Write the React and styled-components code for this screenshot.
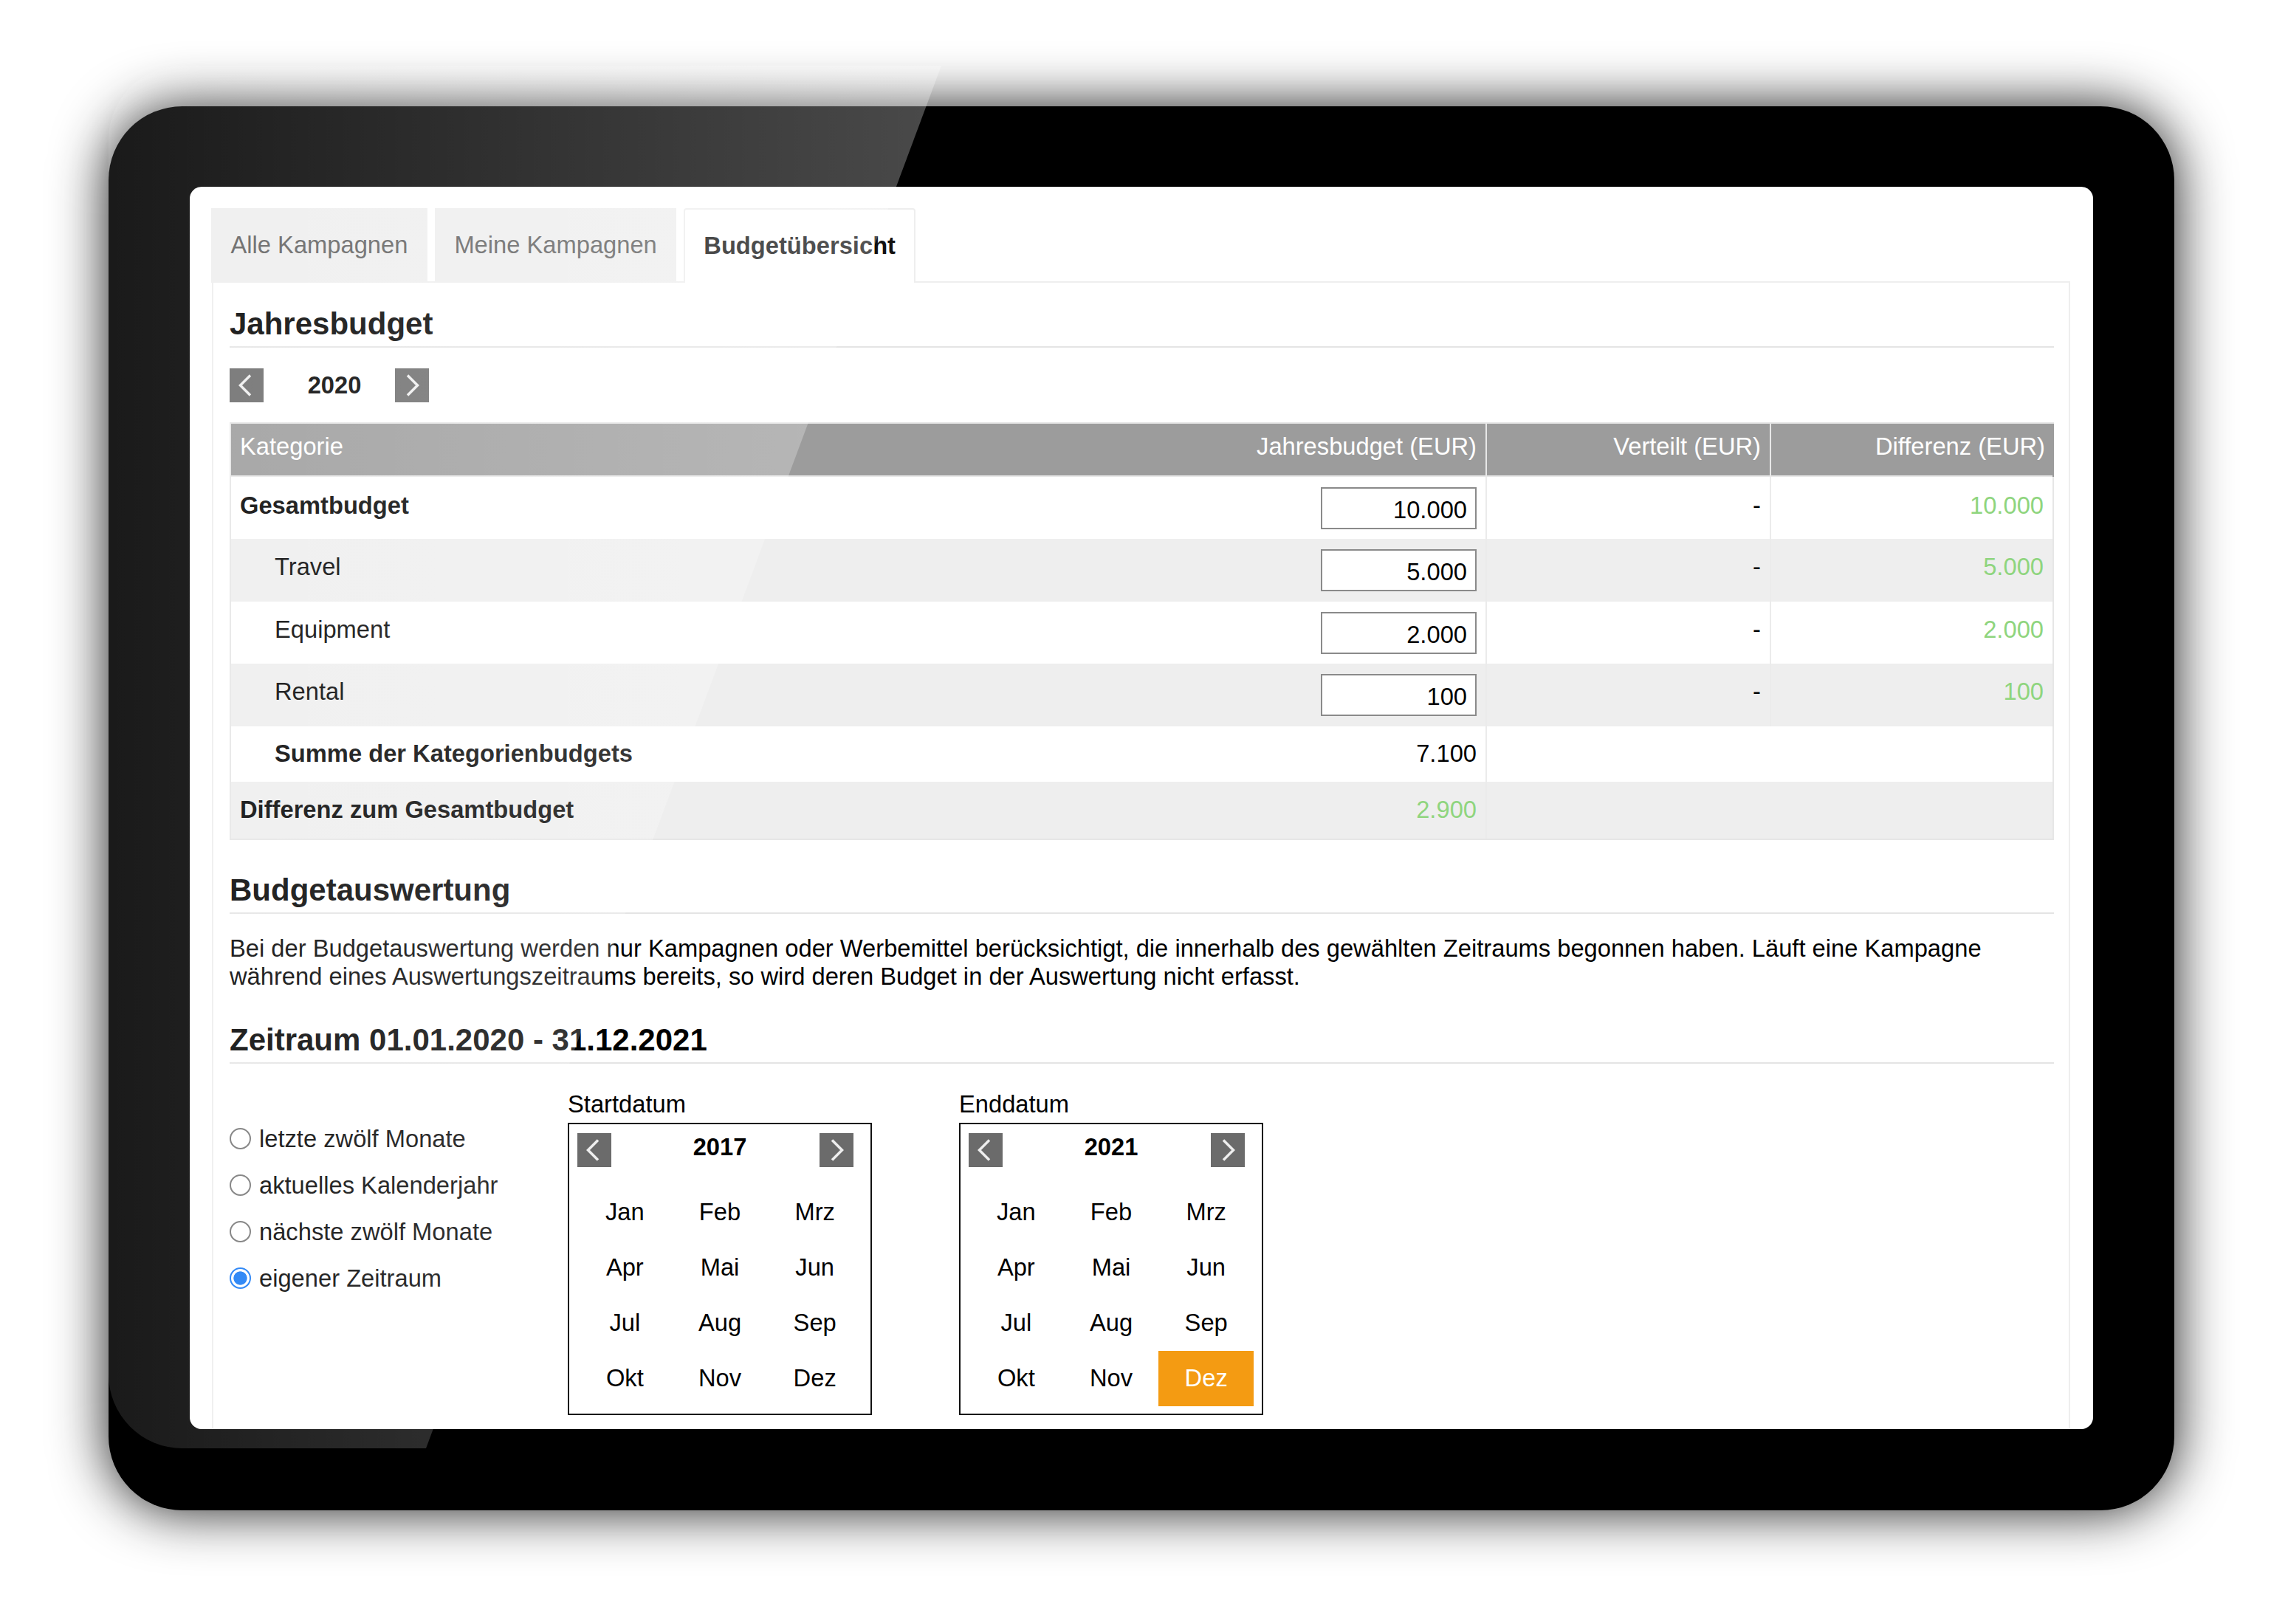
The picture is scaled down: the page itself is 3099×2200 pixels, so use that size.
import React from 'react';
import styled, { createGlobalStyle } from 'styled-components';

const GlobalStyle = createGlobalStyle`
  html, body {
    margin: 0;
    background: #fff;
  }
  * {
    box-sizing: border-box;
  }
`;

const Page = styled.div`
  position: relative;
  width: 3099px;
  height: 2200px;
  padding: 144px 0 0 147px;
  overflow: hidden;
  background: #fff;
  font-family: 'Liberation Sans', Arial, sans-serif;
  font-size: 32.7px;
  line-height: 37.6px;
  color: #000;
`;

const Tablet = styled.div`
  width: 2798px;
  height: 1902px;
  padding: 109px 110px;
  background: #000;
  border-radius: 100px;
  box-shadow: 0 0 75px rgba(0, 0, 0, 0.9);
`;

// Spiegelung liegt über dem ganzen Gerät
const Glare = styled.div`
  position: absolute;
  left: 147px;
  top: 89px;
  width: 1128px;
  height: 1873px;
  pointer-events: none;
  background: linear-gradient(90deg, rgba(255, 255, 255, 0.1), rgba(255, 255, 255, 0.29));
  clip-path: path('M0 100 A100 100 0 0 1 100 0 H1128 L430 1873 H100 A100 100 0 0 1 0 1773 Z');
`;

const Screen = styled.div`
  display: flex;
  flex-direction: column;
  width: 2578px;
  height: 1683px;
  padding: 29px 31px 0 29px;
  overflow: hidden;
  background: #fff;
  border-radius: 16px;
`;

const Tabs = styled.div`
  display: flex;
  gap: 10px;
`;

const Tab = styled.div`
  position: relative;
  height: 101px;
  margin-bottom: -2px;
  padding: 0 ${(props) => (props.$active ? 25 : 26.5)}px;
  line-height: ${(props) => (props.$active ? 97 : 99)}px;
  white-space: nowrap;
  color: ${(props) => (props.$active ? '#111' : '#5f5f5f')};
  font-weight: ${(props) => (props.$active ? 700 : 400)};
  background: ${(props) => (props.$active ? '#fff' : '#eee')};
  border: ${(props) => (props.$active ? '2px solid #eee' : 'none')};
  border-bottom: none;
  border-radius: ${(props) => (props.$active ? '4px 4px 0 0' : '0')};
`;

const Panel = styled.div`
  flex: 1;
  margin-left: 1px;
  padding: 0 20px 0 22px;
  border: 2px solid #eee;
  border-bottom: none;
`;

const Heading = styled.h2`
  margin: ${(props) => props.$top}px 0 0;
  padding-bottom: 6px;
  font-size: 42px;
  line-height: 48px;
  font-weight: 700;
  color: #000;
  border-bottom: 2px solid #e4e4e4;
`;

const YearNav = styled.div`
  display: flex;
  align-items: center;
  margin: 28px 0 27px;
`;

const Year = styled.div`
  width: 178px;
  padding-left: 14px;
  text-align: center;
  font-weight: 700;
`;

const ArrowButton = styled.button`
  display: block;
  width: 46px;
  height: 46px;
  padding: 0;
  background: #6b6b6b;
  border: none;
`;

const ArrowIcon = styled.svg`
  display: block;
  fill: none;
  stroke: #eee;
  stroke-width: 3.5;
`;

const BudgetTable = styled.table`
  width: 2471px;
  table-layout: fixed;
  border-collapse: separate;
  border-spacing: 0;
  border: 2px solid #e6e6e6;
`;

const HeadCell = styled.th`
  height: 72px;
  padding: 12px ${(props) => (props.$last ? 10 : 12)}px 0 12px;
  vertical-align: top;
  font-weight: 400;
  color: #fff;
  white-space: nowrap;
  text-align: ${(props) => props.$align || 'right'};
  background: #9c9c9c;
  border-right: ${(props) => (props.$divider ? '2px solid #e8e8e8' : 'none')};
  border-bottom: 2px solid #e8e8e8;
  box-shadow: ${(props) => (props.$last ? '2px 0 0 #9c9c9c' : 'none')};
`;

const Row = styled.tr`
  height: ${(props) => props.$height}px;
  background: ${(props) => (props.$shaded ? '#eee' : '#fff')};
`;

const Cell = styled.td`
  padding: ${(props) => props.$top ?? 19}px 12px 0 ${(props) => props.$indent || 12}px;
  vertical-align: top;
  white-space: nowrap;
  text-align: ${(props) => props.$align || 'right'};
  font-weight: ${(props) => (props.$bold ? 700 : 400)};
  color: ${(props) => (props.$green ? '#8fd57e' : '#000')};
  border-right: ${(props) => (props.$divider ? '2px solid #ebebeb' : 'none')};
`;

const BudgetInput = styled.input`
  display: block;
  width: 211px;
  height: 57px;
  margin-left: auto;
  padding: 4px 11px 0 0;
  font-family: inherit;
  font-size: 32.7px;
  color: #000;
  text-align: right;
  background: #fff;
  border: 2px solid #8a8a8a;
  border-radius: 0;
`;

const Paragraph = styled.p`
  margin: 28px 0 0;
`;

const RangeRow = styled.div`
  display: flex;
  margin-top: 36px;
`;

const RadioList = styled.div`
  width: 458px;
  padding-top: 34px;
`;

const RadioRow = styled.label`
  display: flex;
  align-items: center;
  gap: 11px;
  height: 63px;
`;

const Radio = styled.input`
  appearance: none;
  flex: none;
  width: 29px;
  height: 29px;
  margin: 0;
  background: #fff;
  border: 2px solid #767676;
  border-radius: 50%;

  &:checked {
    border-color: #1478f5;
    background: radial-gradient(circle closest-side, #1478f5 70%, #fff 76%);
  }
`;

const CalendarColumn = styled.div`
  width: 412px;
  margin-right: 118px;
`;

const CalendarLabel = styled.div`
  margin-bottom: 6px;
`;

const Calendar = styled.div`
  height: 396px;
  padding: 12px 11px 11px;
  border: 2px solid #111;
`;

const CalendarHead = styled.div`
  display: flex;
  height: 70px;
  padding-right: 12px;
`;

const CalendarYear = styled.div`
  flex: 1;
  padding-left: 12px;
  text-align: center;
  font-weight: 700;
`;

const Months = styled.div`
  display: grid;
  grid-template-columns: repeat(3, 1fr);
  grid-auto-rows: 75px;
`;

const Month = styled.div`
  display: flex;
  align-items: center;
  justify-content: center;
  color: ${(props) => (props.$selected ? '#fff' : '#000')};
  background: ${(props) => (props.$selected ? '#f49b12' : 'transparent')};
`;

const MONTHS = ['Jan', 'Feb', 'Mrz', 'Apr', 'Mai', 'Jun', 'Jul', 'Aug', 'Sep', 'Okt', 'Nov', 'Dez'];

const CATEGORIES = [
  { name: 'Travel', budget: '5.000', height: 85, shaded: true },
  { name: 'Equipment', budget: '2.000', height: 84 },
  { name: 'Rental', budget: '100', height: 85, shaded: true },
];

const RANGES = ['letzte zwölf Monate', 'aktuelles Kalenderjahr', 'nächste zwölf Monate', 'eigener Zeitraum'];

function Arrow({ next }) {
  return (
    <ArrowButton type="button">
      <ArrowIcon width="46" height="46" viewBox="0 0 46 46">
        <polyline points={next ? '17,9.5 30.5,23 17,36.5' : '28,9.5 14.5,23 28,36.5'} />
      </ArrowIcon>
    </ArrowButton>
  );
}

function MonthPicker({ label, year, selected }) {
  return (
    <CalendarColumn>
      <CalendarLabel>{label}</CalendarLabel>
      <Calendar>
        <CalendarHead>
          <Arrow />
          <CalendarYear>{year}</CalendarYear>
          <Arrow next />
        </CalendarHead>
        <Months>
          {MONTHS.map((month) => (
            <Month key={month} $selected={month === selected}>
              {month}
            </Month>
          ))}
        </Months>
      </Calendar>
    </CalendarColumn>
  );
}

export default function App() {
  return (
    <>
      <GlobalStyle />
      <Page>
        <Tablet>
          <Screen>
            <Tabs>
              <Tab>Alle Kampagnen</Tab>
              <Tab>Meine Kampagnen</Tab>
              <Tab $active>Budgetübersicht</Tab>
            </Tabs>
            <Panel>
              <Heading $top={32}>Jahresbudget</Heading>
              <YearNav>
                <Arrow />
                <Year>2020</Year>
                <Arrow next />
              </YearNav>
              <BudgetTable>
                <colgroup>
                  <col width="1300" />
                  <col width="401" />
                  <col width="385" />
                  <col width="381" />
                </colgroup>
                <thead>
                  <tr>
                    <HeadCell $align="left">Kategorie</HeadCell>
                    <HeadCell $divider>Jahresbudget (EUR)</HeadCell>
                    <HeadCell $divider>Verteilt (EUR)</HeadCell>
                    <HeadCell $last>Differenz (EUR)</HeadCell>
                  </tr>
                </thead>
                <tbody>
                  <Row $height={84}>
                    <Cell $align="left" $bold $top={20}>Gesamtbudget</Cell>
                    <Cell $top={14} $divider>
                      <BudgetInput readOnly value="10.000" />
                    </Cell>
                    <Cell $divider $top={20}>-</Cell>
                    <Cell $green $top={20}>10.000</Cell>
                  </Row>
                  {CATEGORIES.map((category) => (
                    <Row key={category.name} $height={category.height} $shaded={category.shaded}>
                      <Cell $align="left" $indent={59}>{category.name}</Cell>
                      <Cell $top={14} $divider>
                        <BudgetInput readOnly value={category.budget} />
                      </Cell>
                      <Cell $divider>-</Cell>
                      <Cell $green>{category.budget}</Cell>
                    </Row>
                  ))}
                  <Row $height={75}>
                    <Cell $align="left" $indent={59} $bold $top={18}>Summe der Kategorienbudgets</Cell>
                    <Cell $divider $top={18}>7.100</Cell>
                    <Cell colSpan={2} />
                  </Row>
                  <Row $height={77} $shaded>
                    <Cell $align="left" $bold>Differenz zum Gesamtbudget</Cell>
                    <Cell $green $divider>2.900</Cell>
                    <Cell colSpan={2} />
                  </Row>
                </tbody>
              </BudgetTable>
              <Heading $top={44}>Budgetauswertung</Heading>
              <Paragraph>
                Bei der Budgetauswertung werden nur Kampagnen oder Werbemittel berücksichtigt, die innerhalb des gewählten Zeitraums begonnen haben. Läuft eine Kampagne während eines Auswertungszeitraums bereits, so wird deren Budget in der Auswertung nicht erfasst.
              </Paragraph>
              <Heading $top={44}>Zeitraum 01.01.2020 - 31.12.2021</Heading>
              <RangeRow>
                <RadioList>
                  {RANGES.map((range, index) => (
                    <RadioRow key={range}>
                      <Radio type="radio" name="range" defaultChecked={index === 3} />
                      {range}
                    </RadioRow>
                  ))}
                </RadioList>
                <MonthPicker label="Startdatum" year="2017" />
                <MonthPicker label="Enddatum" year="2021" selected="Dez" />
              </RangeRow>
            </Panel>
          </Screen>
        </Tablet>
        <Glare />
      </Page>
    </>
  );
}
